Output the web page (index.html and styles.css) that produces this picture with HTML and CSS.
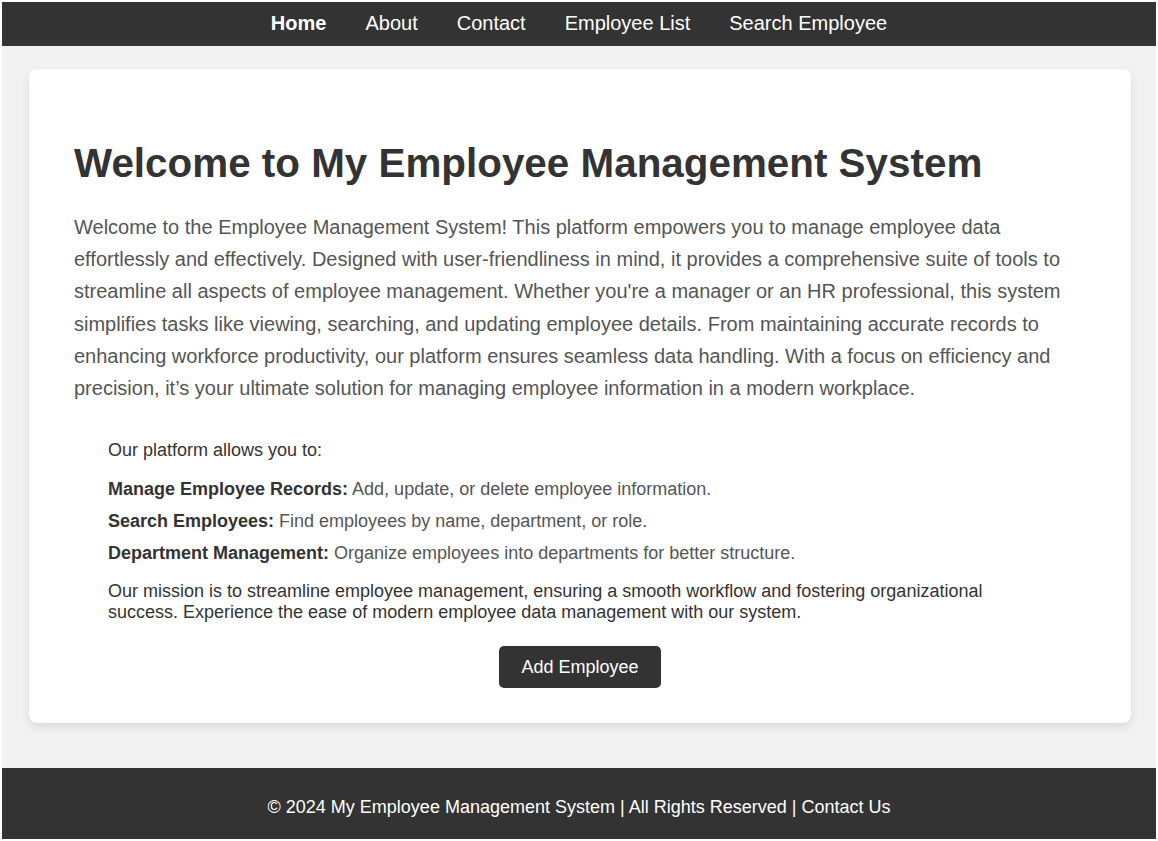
FILE: index.html
```html
<!DOCTYPE html>
<html lang="en">
<head>
<meta charset="utf-8">
<title>My Employee Management System</title>
<link rel="stylesheet" href="styles.css">
</head>
<body>
<nav class="topnav">
  <a class="nav-link active" href="#">Home</a>
  <a class="nav-link" href="#">About</a>
  <a class="nav-link" href="#">Contact</a>
  <a class="nav-link" href="#">Employee List</a>
  <a class="nav-link" href="#">Search Employee</a>
</nav>
<main class="main">
  <section class="card">
    <h1 class="title">Welcome to My Employee Management System</h1>
    <p class="intro">Welcome to the Employee Management System! This platform empowers you to manage employee data effortlessly and effectively. Designed with user-friendliness in mind, it provides a comprehensive suite of tools to streamline all aspects of employee management. Whether you're a manager or an HR professional, this system simplifies tasks like viewing, searching, and updating employee details. From maintaining accurate records to enhancing workforce productivity, our platform ensures seamless data handling. With a focus on efficiency and precision, it’s your ultimate solution for managing employee information in a modern workplace.</p>
    <div class="features">
      <p class="lead">Our platform allows you to:</p>
      <ul class="feature-list">
        <li class="feature"><strong>Manage Employee Records:</strong> Add, update, or delete employee information.</li>
        <li class="feature"><strong>Search Employees:</strong> Find employees by name, department, or role.</li>
        <li class="feature"><strong>Department Management:</strong> Organize employees into departments for better structure.</li>
      </ul>
      <p class="mission">Our mission is to streamline employee management, ensuring a smooth workflow and fostering organizational success. Experience the ease of modern employee data management with our system.</p>
    </div>
    <div class="actions">
      <a class="btn" href="#">Add Employee</a>
    </div>
  </section>
</main>
<footer class="footer">
  <p class="footer-text">© 2024 My Employee Management System | All Rights Reserved | <a class="footer-link" href="#">Contact Us</a></p>
</footer>
</body>
</html>
```
FILE: styles.css
```css
html {
  background: #ffffff;
}
body {
  margin: 2px;
  background: #f2f2f2;
  font-family: "Liberation Sans", Arial, sans-serif;
  color: #333;
}
.topnav {
  background: #333;
  height: 44px;
  box-sizing: border-box;
  padding-bottom: 2px;
  display: flex;
  justify-content: center;
  align-items: center;
}
.nav-link {
  color: #fff;
  text-decoration: none;
  font-size: 20px;
  padding: 0 19.5px;
}
.nav-link.active {
  font-weight: bold;
}
.main {
  padding: 23px 25px 45px 27px;
}
.card {
  background: #fff;
  border-radius: 8px;
  box-shadow: 0 4px 10px rgba(0, 0, 0, 0.1);
  padding: 40px 45px 35px;
}
.title {
  font-size: 40.4px;
  margin: 31px 0 0;
  color: #333;
}
.intro {
  font-size: 20px;
  line-height: 32.2px;
  color: #555;
  margin: 24px 0 21px;
}
.features {
  padding: 15px 34px 0;
  max-width: 900px;
}
.lead {
  font-size: 18px;
  margin: 0 0 18px;
  color: #333;
}
.feature-list {
  list-style: none;
  margin: 0;
  padding: 0;
}
.feature {
  font-size: 18px;
  color: #555;
  margin-bottom: 11px;
}
.feature strong {
  color: #333;
}
.feature:last-child {
  margin-bottom: 0;
}
.mission {
  font-size: 18px;
  color: #333;
  margin: 17px 0 0;
}
.actions {
  display: flex;
  justify-content: center;
  margin-top: 23px;
}
.btn {
  background: #333;
  color: #fff;
  text-decoration: none;
  font-size: 18px;
  line-height: 22px;
  padding: 10px 22px;
  border-radius: 5px;
}
.footer {
  background: #333;
  color: #fff;
  padding: 29px 0 21px;
  text-align: center;
}
.footer-text {
  margin: 0;
  font-size: 18px;
}
.footer-link {
  color: #fff;
  text-decoration: none;
}
```
